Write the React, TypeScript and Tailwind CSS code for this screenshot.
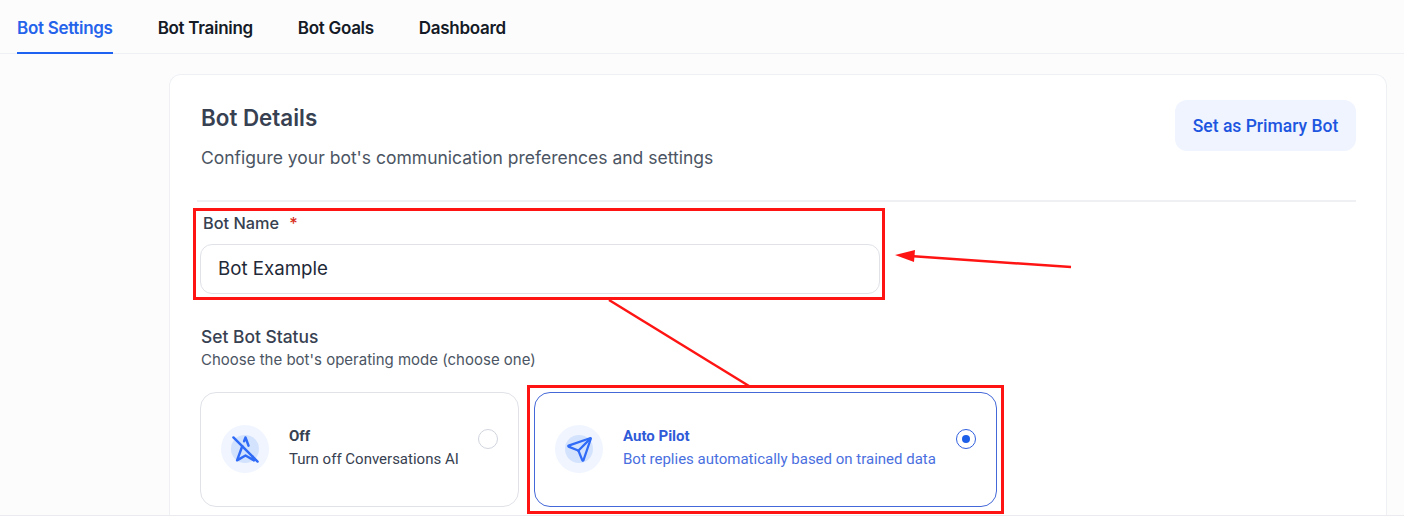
import { useState } from "react";
import { Navigation2Off, Send } from "lucide-react";

const tabs = ["Bot Settings", "Bot Training", "Bot Goals", "Dashboard"];

function ModeCard({ title, desc, icon, active, className }: { title: string; desc: string; icon: React.ReactNode; active?: boolean; className: string }) {
  return (
    <div className={`flex h-[115px] items-start rounded-[16px] border bg-white pl-[20px] pr-[20px] pt-[32px] ${active ? "border-[#4468d8]" : "border-[#e0e2e8]"} ${className}`}>
      <div className="flex h-[48px] w-[48px] shrink-0 items-center justify-center rounded-full bg-[#f0f5ff]">
        <div className="flex h-[28px] w-[28px] items-center justify-center rounded-full bg-[#d3e2fd]">{icon}</div>
      </div>
      <div className="ml-[20px] flex-1 font-['Roboto',sans-serif] leading-[23px]">
        <p className={`text-[15px] font-bold ${active ? "text-[#2f5bd8]" : "text-[#374151]"}`}>{title}</p>
        <p className={`text-[15px] ${active ? "text-[#4a6fe0]" : "text-[#374151]"}`}>{desc}</p>
      </div>
      <div className={`mt-[4px] flex h-[20px] w-[20px] items-center justify-center rounded-full border ${active ? "border-[#2f5fe0]" : "border-[#d0d5dd]"}`}>
        {active && <div className="h-[8px] w-[8px] rounded-full bg-[#1d5fe8]" />}
      </div>
    </div>
  );
}

export default function App() {
  const [name, setName] = useState("Bot Example");

  return (
    <div className="relative h-[531px] w-[1404px] overflow-hidden bg-[#fcfcfd] font-['Inter',sans-serif]">
      <nav className="flex h-[54px] gap-[45px] border-b border-[#eef0f4] pl-[17px]">
        {tabs.map((t, i) => (
          <a key={t} className={`flex h-[54px] items-center border-b-2 pt-[6px] text-[17px] font-semibold tracking-[-0.3px] ${i === 0 ? "border-[#1d62f0] text-[#2563eb]" : "border-transparent text-[#141a26]"}`}>
            {t}
          </a>
        ))}
      </nav>

      <div className="ml-[169px] mt-[20px] h-[441px] w-[1218px] rounded-t-[12px] border border-b-0 border-[#eef0f4] bg-white pl-[30px] pr-[30px] pt-[25px]">
        <div className="flex items-start justify-between">
          <div className="ml-px">
            <h1 className="mt-[1px] text-[22.4px] font-semibold leading-[34px] text-[#374151]">Bot Details</h1>
            <p className="mt-[11px] text-[17.5px] leading-[24px] text-[#4b5563]">Configure your bot's communication preferences and settings</p>
          </div>
          <button className="h-[51px] w-[181px] rounded-[12px] bg-[#eff4ff] pt-[1px] font-['Roboto',sans-serif] text-[17.5px] font-medium text-[#1d56e0]">Set as Primary Bot</button>
        </div>

        <div className="ml-[-3px] mt-[30px] h-[2px] bg-[#eef0f4]" />

        <label className="ml-[3px] mt-[11px] block text-[16.3px] font-medium leading-[20px] text-[#374151]">
          Bot Name <span className="ml-[6px] text-[#d92d20]">*</span>
        </label>
        <input
          value={name}
          onChange={(e) => setName(e.target.value)}
          className="mt-[11px] block h-[50px] w-[680px] rounded-[12px] border border-[#e0e2e8] bg-white px-[17px] pb-[1px] text-[18.7px] text-[#1f2937] outline-none"
        />

        <h2 className="ml-px mt-[32px] text-[17.4px] font-medium leading-[22px] text-[#374151]">Set Bot Status</h2>
        <p className="ml-px mt-[2px] text-[15px] leading-[20px] text-[#4b5563]">Choose the bot's operating mode (choose one)</p>

        <div className="mt-[22px] flex gap-[15px]">
          <ModeCard className="w-[319px]" title="Off" desc="Turn off Conversations AI" icon={<Navigation2Off size={29} color="#2f6bf6" strokeWidth={2} className="shrink-0" />} />
          <ModeCard className="w-[463px]" title="Auto Pilot" desc="Bot replies automatically based on trained data" icon={<Send size={27} color="#2f6bf6" strokeWidth={2} className="shrink-0" />} active />
        </div>
      </div>

      <div className="absolute inset-x-0 top-[515px] h-[16px] border-t border-[#e9ebef] bg-white" />

      {/* review annotations drawn over the page */}
      <div className="pointer-events-none absolute left-[193px] top-[208px] h-[92px] w-[692px] border-[3px] border-[#ff1414]" />
      <div className="pointer-events-none absolute left-[527px] top-[385px] h-[129px] w-[477px] border-[3px] border-[#ff1414]" />
      <svg className="pointer-events-none absolute left-0 top-0" width="1404" height="531" fill="none">
        <path d="M609 300 749 386" stroke="#ff1414" strokeWidth="2.5" />
        <path d="M1071 267 910 256" stroke="#ff1414" strokeWidth="2.5" />
        <path d="M895 255 915 250 914 262Z" fill="#ff1414" />
      </svg>
    </div>
  );
}
